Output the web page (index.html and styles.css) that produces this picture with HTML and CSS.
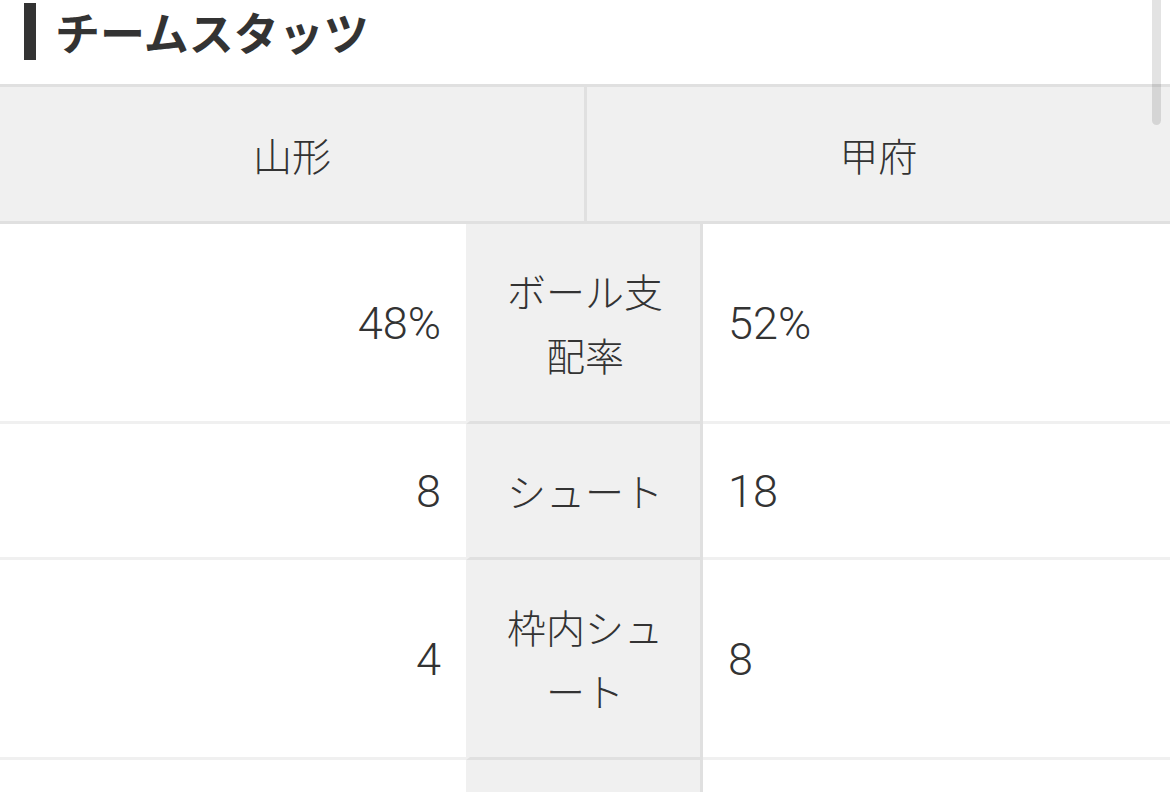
FILE: index.html
```html
<!DOCTYPE html>
<html lang="ja">
<head>
<meta charset="utf-8">
<title>チームスタッツ</title>
<link rel="stylesheet" href="styles.css">
</head>
<body>
<div class="page">
  <h2 class="heading"><span class="heading-text">チームスタッツ</span></h2>
  <div class="stats">
    <div class="teams">
      <div class="team team-home">山形</div>
      <div class="team">甲府</div>
    </div>
    <div class="row">
      <div class="val val-home">48%</div>
      <div class="label">ボール支配率</div>
      <div class="val val-away">52%</div>
    </div>
    <div class="row">
      <div class="val val-home">8</div>
      <div class="label">シュート</div>
      <div class="val val-away">18</div>
    </div>
    <div class="row">
      <div class="val val-home">4</div>
      <div class="label">枠内シュート</div>
      <div class="val val-away">8</div>
    </div>
    <div class="row">
      <div class="val val-home">&nbsp;</div>
      <div class="label">&nbsp;</div>
      <div class="val val-away">&nbsp;</div>
    </div>
  </div>
  <div class="scroll-thumb"></div>
</div>
</body>
</html>
```

FILE: styles.css
```css
* { box-sizing: border-box; }
html, body {
  margin: 0;
  padding: 0;
  height: 792px;
  overflow: hidden;
  background: #fff;
}
body {
  font-family: "Noto Sans CJK JP", sans-serif;
  color: #333;
}
.page {
  position: relative;
  width: 1170px;
  height: 792px;
  overflow: hidden;
}
.heading {
  display: flex;
  align-items: center;
  height: 57px;
  margin: 3px 0 24px;
  padding-left: 24px;
  font-size: 45px;
  font-weight: 700;
  color: #333;
}
.heading::before {
  content: "";
  width: 12px;
  height: 57px;
  background: #333;
  margin-right: 19px;
  flex: none;
}
.heading-text {
  line-height: 1;
}
.teams {
  display: grid;
  grid-template-columns: 587px 1fr;
  background: #f0f0f0;
  border-top: 3px solid #e0e0e0;
  border-bottom: 3px solid #e0e0e0;
}
.team {
  text-align: center;
  padding: 35px 0;
  font-size: 39px;
  font-weight: 300;
  line-height: 64px;
}
.team-home {
  border-right: 3px solid #e0e0e0;
}
.row {
  display: grid;
  grid-template-columns: 466px 237px 1fr;
}
.val {
  display: flex;
  align-items: center;
  font-family: "Roboto", "Noto Sans CJK JP", sans-serif;
  font-size: 45px;
  font-weight: 300;
  line-height: 64px;
  padding: 36px 25px 33px;
  border-bottom: 3px solid #f0f0f0;
}
.val-home { justify-content: flex-end; }
.val-away { justify-content: flex-start; }
.label {
  display: flex;
  align-items: center;
  justify-content: center;
  text-align: center;
  background: #f0f0f0;
  padding: 34px 22px 35px;
  font-size: 39px;
  font-weight: 300;
  line-height: 64px;
  border-left: 4px solid #f0f0f0;
  border-right: 3px solid #e0e0e0;
  border-bottom: 3px solid #e0e0e0;
}
.scroll-thumb {
  position: absolute;
  top: 0;
  left: 1152px;
  width: 9px;
  height: 125px;
  border-radius: 0 0 5px 5px;
  background: rgba(0, 0, 0, 0.11);
}
```
